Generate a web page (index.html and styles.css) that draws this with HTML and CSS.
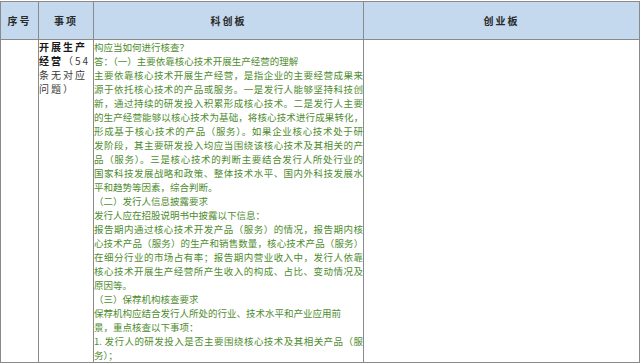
FILE: index.html
```html
<!DOCTYPE html>
<html lang="zh">
<head>
<meta charset="utf-8">
<link rel="stylesheet" href="styles.css">
</head>
<body>
<table class="grid">
  <colgroup>
    <col class="c-no">
    <col class="c-item">
    <col class="c-star">
    <col class="c-gem">
  </colgroup>
  <thead>
    <tr>
      <th>序号</th>
      <th>事项</th>
      <th>科创板</th>
      <th>创业板</th>
    </tr>
  </thead>
  <tbody>
    <tr>
      <td></td>
      <td class="item">
        <div class="ln"><b>开展生产</b></div>
        <div class="ln"><b>经营</b>（54</div>
        <div class="ln">条无对应</div>
        <div class="ln">问题）</div>
      </td>
      <td class="body">
        <div class="ln">构应当如何进行核查？</div>
        <div class="ln">答：（一）主要依靠核心技术开展生产经营的理解</div>
        <div class="ln j">主要依靠核心技术开展生产经营，是指企业的主要经营成果来</div>
        <div class="ln j">源于依托核心技术的产品或服务。一是发行人能够坚持科技创</div>
        <div class="ln j">新，通过持续的研发投入积累形成核心技术。二是发行人主要</div>
        <div class="ln j t">的生产经营能够以核心技术为基础，将核心技术进行成果转化，</div>
        <div class="ln j">形成基于核心技术的产品（服务）。如果企业核心技术处于研</div>
        <div class="ln j">发阶段，其主要研发投入均应当围绕该核心技术及其相关的产</div>
        <div class="ln j">品（服务）。三是核心技术的判断主要结合发行人所处行业的</div>
        <div class="ln j">国家科技发展战略和政策、整体技术水平、国内外科技发展水</div>
        <div class="ln">平和趋势等因素，综合判断。</div>
        <div class="ln">（二）发行人信息披露要求</div>
        <div class="ln">发行人应在招股说明书中披露以下信息：</div>
        <div class="ln j">报告期内通过核心技术开发产品（服务）的情况，报告期内核</div>
        <div class="ln j t">心技术产品（服务）的生产和销售数量，核心技术产品（服务）</div>
        <div class="ln j">在细分行业的市场占有率；报告期内营业收入中，发行人依靠</div>
        <div class="ln j">核心技术开展生产经营所产生收入的构成、占比、变动情况及</div>
        <div class="ln">原因等。</div>
        <div class="ln">（三）保荐机构核查要求</div>
        <div class="ln">保荐机构应结合发行人所处的行业、技术水平和产业应用前</div>
        <div class="ln">景，重点核查以下事项：</div>
        <div class="ln j">1. 发行人的研发投入是否主要围绕核心技术及其相关产品（服</div>
        <div class="ln">务）；</div>
      </td>
      <td></td>
    </tr>
  </tbody>
</table>
</body>
</html>
```

FILE: styles.css
```css
html, body {
  margin: 0;
  padding: 0;
  background: #ffffff;
}

body {
  padding-top: 1px;
  font-family: "Noto Sans CJK SC", "Noto Sans", sans-serif;
}

.grid {
  border-collapse: collapse;
  table-layout: fixed;
  width: 639px;
}

.c-no { width: 38px; }
.c-item { width: 55px; }
.c-star { width: 270px; }
.c-gem { width: 276px; }

.grid th,
.grid td {
  border: 1px solid #8a8a8a;
  padding: 0;
}

.grid th {
  height: 37px;
  background: #c4d8ee;
  color: #2a2a2a;
  font-size: 10px;
  font-weight: 700;
  letter-spacing: 2px;
  text-align: center;
  vertical-align: middle;
}

.grid td {
  vertical-align: top;
  padding-top: 0;
  padding-bottom: 0;
}

.ln {
  height: 14px;
  line-height: 14px;
  white-space: nowrap;
}

.item {
  padding-left: 6px;
  font-size: 10px;
  letter-spacing: 2px;
  color: #3a3a3a;
}

.item b {
  color: #1a1a1a;
  font-weight: 700;
}

.body {
  padding-left: 5px;
  padding-right: 1px;
  font-size: 9.5px;
  color: #4f8c2f;
}

.j {
  text-align: justify;
  text-align-last: justify;
}

.t {
  letter-spacing: -0.15px;
}
```
